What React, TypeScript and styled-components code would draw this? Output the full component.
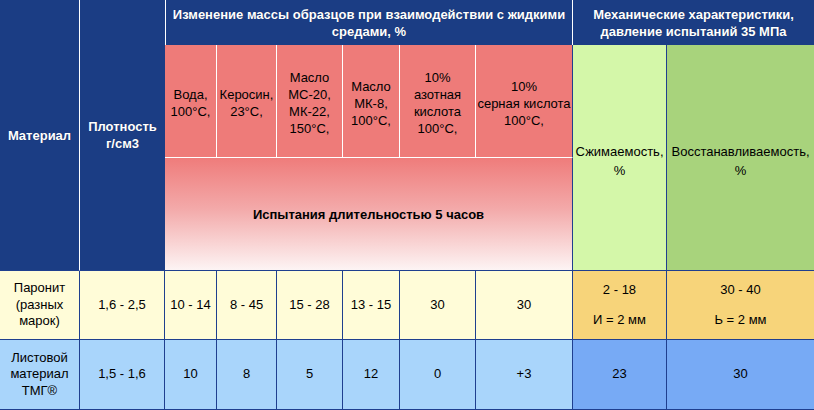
import React from "react";
import styled, { createGlobalStyle, css } from "styled-components";

const GlobalStyle = createGlobalStyle`
  html, body { margin: 0; padding: 0; background: #ffffff; }
  body { font-family: "Liberation Sans", Arial, Helvetica, sans-serif; }
`;

const NAVY = "#1b3d84";
const LINE = "#1f3f8f";
const RED = "#ee7b79";

const Table = styled.div`
  display: grid;
  grid-template-columns: 80px 85px 52px 60px 66px 57px 76px 97px 94px 147px;
  grid-template-rows: 45px 113px 113px 69px 70px;
  width: 814px;
  height: 410px;
`;

type CellProps = {
  $bg: string;
  $span?: number;
  $rows?: number;
  $br?: string;
  $bb?: string;
  $bl?: string;
};

const Cell = styled.div<CellProps>`
  box-sizing: border-box;
  display: flex;
  align-items: center;
  justify-content: center;
  text-align: center;
  padding: 0 2px;
  background: ${(p) => p.$bg};
  color: #000;
  font-size: 13px;
  line-height: 16.5px;
  grid-column: span ${(p) => p.$span ?? 1};
  grid-row: span ${(p) => p.$rows ?? 1};
  ${(p) => p.$br && css`border-right: 1px solid ${p.$br};`}
  ${(p) => p.$bb && css`border-bottom: 1px solid ${p.$bb};`}
  ${(p) => p.$bl && css`border-left: 1px solid ${p.$bl};`}
`;

const HeadCell = styled(Cell)`
  color: #ffffff;
  font-weight: bold;
  line-height: 17px;
  text-shadow: 0 0 1px rgba(0, 0, 0, 0.35);
`;

const MediumCell = styled(Cell)`
  line-height: 17px;
  padding: 4px 0 0;
  white-space: nowrap;
  overflow: visible;
`;

const GradientCell = styled(Cell)`
  background: linear-gradient(180deg, #ef7c7b 0%, #f3a9a9 45%, #fdf4f4 100%);
  font-weight: bold;
  padding-top: 2px;
`;

const MechCell = styled(Cell)`
  line-height: 19px;
  padding-top: 6px;
`;

const Stack = styled.div`
  display: flex;
  flex-direction: column;
  align-items: center;
  gap: 14px;
  line-height: 16px;
`;

const media = [
  { text: ["Вода,", "100°С,"] },
  { text: ["Керосин,", "23°С,"] },
  { text: ["Масло", "МС-20,", "МК-22,", "150°С,"] },
  { text: ["Масло", "МК-8,", "100°С,"] },
  { text: ["10%", "азотная", "кислота", "100°С,"] },
  { text: ["10%", "серная кислота", "100°С,"] },
];

type Row = {
  material: string[];
  density: string;
  values: string[];
  mech: { main: string; note?: string }[];
  bg: string;
  mechBg: string;
};

const rows: Row[] = [
  {
    material: ["Паронит", "(разных", "марок)"],
    density: "1,6 - 2,5",
    values: ["10 - 14", "8 - 45", "15 - 28", "13 - 15", "30", "30"],
    mech: [
      { main: "2 - 18", note: "И = 2 мм" },
      { main: "30 - 40", note: "Ь = 2 мм" },
    ],
    bg: "#fffcd8",
    mechBg: "#f7d47a",
  },
  {
    material: ["Листовой", "материал", "ТМГ®"],
    density: "1,5 - 1,6",
    values: ["10", "8", "5", "12", "0", "+3"],
    mech: [{ main: "23" }, { main: "30" }],
    bg: "#a9d5fb",
    mechBg: "#77aaf5",
  },
];

const Lines = ({ lines }: { lines: string[] }) => (
  <div>
    {lines.map((l, i) => (
      <React.Fragment key={i}>
        {i > 0 && <br />}
        {l}
      </React.Fragment>
    ))}
  </div>
);

export default function App() {
  return (
    <>
      <GlobalStyle />
      <Table>
        <HeadCell $bg={NAVY} $rows={3} $br="#ffffff" $bb={LINE}>
          <div>Материал</div>
        </HeadCell>
        <HeadCell $bg={NAVY} $rows={3} $bb={LINE}>
          <Lines lines={["Плотность", "г/см3"]} />
        </HeadCell>
        <HeadCell $bg={NAVY} $span={6} $bl="#ffffff" $br="#ffffff">
          <Lines
            lines={[
              "Изменение массы образцов при взаимодействии с жидкими",
              "средами, %",
            ]}
          />
        </HeadCell>
        <HeadCell $bg={NAVY} $span={2}>
          <Lines lines={["Механические характеристики,", "давление испытаний 35 МПа"]} />
        </HeadCell>

        {media.map((m, i) => (
          <MediumCell
            key={i}
            $bg={RED}
            $bb="#ffffff"
            $br={i === media.length - 1 ? LINE : "#ffffff"}
          >
            <Lines lines={m.text} />
          </MediumCell>
        ))}
        <MechCell $bg="#d4f7a9" $rows={2} $br={LINE} $bb={LINE}>
          <Lines lines={["Сжимаемость,", "%"]} />
        </MechCell>
        <MechCell $bg="#a8d37c" $rows={2} $bb={LINE}>
          <Lines lines={["Восстанавливаемость,", "%"]} />
        </MechCell>

        <GradientCell $bg={RED} $span={6} $br={LINE} $bb={LINE}>
          Испытания длительностью 5 часов
        </GradientCell>

        {rows.map((r, ri) => (
          <React.Fragment key={ri}>
            <Cell $bg={r.bg} $br={LINE} $bb={LINE}>
              <Lines lines={r.material} />
            </Cell>
            <Cell $bg={r.bg} $br={LINE} $bb={LINE}>
              {r.density}
            </Cell>
            {r.values.map((v, vi) => (
              <Cell key={vi} $bg={r.bg} $br={LINE} $bb={LINE}>
                {v}
              </Cell>
            ))}
            {r.mech.map((m, mi) => (
              <Cell
                key={mi}
                $bg={r.mechBg}
                $br={mi === 0 ? LINE : undefined}
                $bb={LINE}
              >
                {m.note ? (
                  <Stack>
                    <span>{m.main}</span>
                    <span>{m.note}</span>
                  </Stack>
                ) : (
                  m.main
                )}
              </Cell>
            ))}
          </React.Fragment>
        ))}
      </Table>
    </>
  );
}
